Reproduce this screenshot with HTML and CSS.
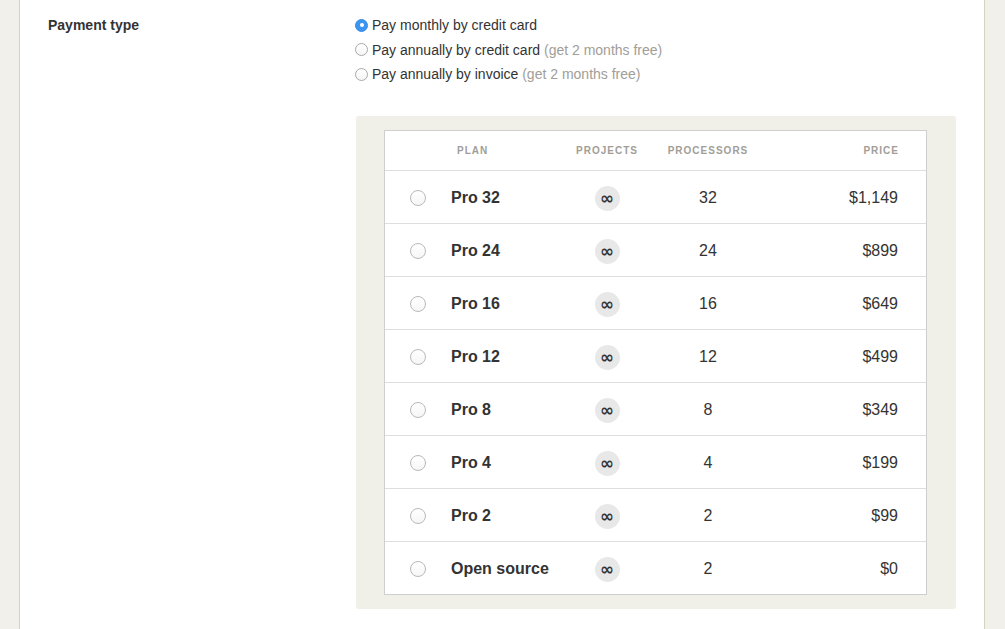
FILE: index.html
```html
<!DOCTYPE html>
<html>
<head>
<meta charset="utf-8">
<link rel="stylesheet" href="styles.css">
</head>
<body>
<div class="panel">
  <div class="field">
    <div class="field-label">Payment type</div>
    <div class="field-body">
      <div class="options">
        <label class="opt"><span class="radio small checked"></span>Pay monthly by credit card</label>
        <label class="opt"><span class="radio small"></span>Pay annually by credit card <span class="muted">(get 2 months free)</span></label>
        <label class="opt"><span class="radio small"></span>Pay annually by invoice <span class="muted">(get 2 months free)</span></label>
      </div>
      <div class="plans-box">
        <div class="plans">
          <div class="row head">
            <div></div>
            <div class="c-plan h-plan">Plan</div>
            <div class="c-center">Projects</div>
            <div class="c-center">Processors</div>
            <div class="c-price h-price">Price</div>
          </div>
          <div class="row"><div class="c-radio"><span class="radio"></span></div><div class="c-plan name">Pro 32</div><div class="c-center"><span class="inf">∞</span></div><div class="c-center">32</div><div class="c-price">$1,149</div></div>
          <div class="row"><div class="c-radio"><span class="radio"></span></div><div class="c-plan name">Pro 24</div><div class="c-center"><span class="inf">∞</span></div><div class="c-center">24</div><div class="c-price">$899</div></div>
          <div class="row"><div class="c-radio"><span class="radio"></span></div><div class="c-plan name">Pro 16</div><div class="c-center"><span class="inf">∞</span></div><div class="c-center">16</div><div class="c-price">$649</div></div>
          <div class="row"><div class="c-radio"><span class="radio"></span></div><div class="c-plan name">Pro 12</div><div class="c-center"><span class="inf">∞</span></div><div class="c-center">12</div><div class="c-price">$499</div></div>
          <div class="row"><div class="c-radio"><span class="radio"></span></div><div class="c-plan name">Pro 8</div><div class="c-center"><span class="inf">∞</span></div><div class="c-center">8</div><div class="c-price">$349</div></div>
          <div class="row"><div class="c-radio"><span class="radio"></span></div><div class="c-plan name">Pro 4</div><div class="c-center"><span class="inf">∞</span></div><div class="c-center">4</div><div class="c-price">$199</div></div>
          <div class="row"><div class="c-radio"><span class="radio"></span></div><div class="c-plan name">Pro 2</div><div class="c-center"><span class="inf">∞</span></div><div class="c-center">2</div><div class="c-price">$99</div></div>
          <div class="row"><div class="c-radio"><span class="radio"></span></div><div class="c-plan name">Open source</div><div class="c-center"><span class="inf">∞</span></div><div class="c-center">2</div><div class="c-price">$0</div></div>
        </div>
      </div>
    </div>
  </div>
</div>
</body>
</html>
```

FILE: styles.css
```css
html, body {
  margin: 0;
  padding: 0;
  background: #f1f0ea;
  font-family: "Liberation Sans", Arial, Helvetica, sans-serif;
  color: #333;
  height: 100%;
  overflow: hidden;
}

.panel {
  margin-left: 19px;
  width: 964px;
  height: 100%;
  background: #fff;
  border-left: 1px solid #d6d3c3;
  border-right: 1px solid #d6d3c3;
}

.field {
  display: flex;
  padding-top: 13px;
}

.field-label {
  width: 307px;
  padding-left: 28px;
  font-size: 14px;
  font-weight: bold;
  line-height: 24px;
  color: #333;
}

.field-body {
  display: flex;
  flex-direction: column;
}

.options {
  display: flex;
  flex-direction: column;
}

.opt {
  display: flex;
  align-items: center;
  height: 24.5px;
  font-size: 14px;
  color: #333;
  white-space: pre;
}

.muted {
  color: #a19e97;
}

.radio {
  display: inline-block;
  box-sizing: border-box;
  width: 16px;
  height: 16px;
  border-radius: 50%;
  border: 1px solid #b9b9b9;
  background: linear-gradient(#fff, #f6f6f6);
}

.radio.small {
  width: 13px;
  height: 13px;
  margin-right: 4px;
  border-color: #a9a9a9;
}

.radio.checked {
  position: relative;
  background: #3c94f0;
  border-color: #3a8de6;
}

.radio.checked::after {
  content: "";
  position: absolute;
  left: 50%;
  top: 50%;
  width: 4px;
  height: 4px;
  margin: -2px 0 0 -2px;
  border-radius: 50%;
  background: #fff;
}

.plans-box {
  margin-top: 29px;
  margin-left: 1px;
  width: 600px;
  box-sizing: border-box;
  padding: 14px 29px 14px 28px;
  background: #f0efe8;
  border-radius: 3px;
}

.plans {
  background: #fff;
  border: 1px solid #cfcfcf;
}

.row {
  display: grid;
  grid-template-columns: 66px 111px 90px 112px 1fr;
  align-items: center;
  height: 53px;
  padding-top: 2px;
  padding-right: 28px;
  border-top: 1px solid #dedede;
  box-sizing: border-box;
  font-size: 16px;
}

.row.head {
  height: 39px;
  padding-top: 0;
  border-top: none;
  font-size: 10px;
  font-weight: bold;
  letter-spacing: 1px;
  text-transform: uppercase;
  color: #a19e98;
}

.c-radio {
  display: flex;
  justify-content: center;
  align-items: center;
}

.c-plan {
  text-align: left;
}

.h-plan {
  padding-left: 6px;
}

.name {
  font-weight: bold;
}

.c-center {
  display: flex;
  justify-content: center;
  align-items: center;
}

.c-price {
  text-align: right;
}

.h-price {
  margin-right: -1px;
}

.inf {
  display: flex;
  justify-content: center;
  align-items: center;
  width: 25px;
  height: 25px;
  margin-top: 2px;
  border-radius: 50%;
  background: #e8e8e8;
  font-family: "DejaVu Sans", sans-serif;
  font-size: 17px;
  font-weight: bold;
  color: #333;
  line-height: 1;
}
```
